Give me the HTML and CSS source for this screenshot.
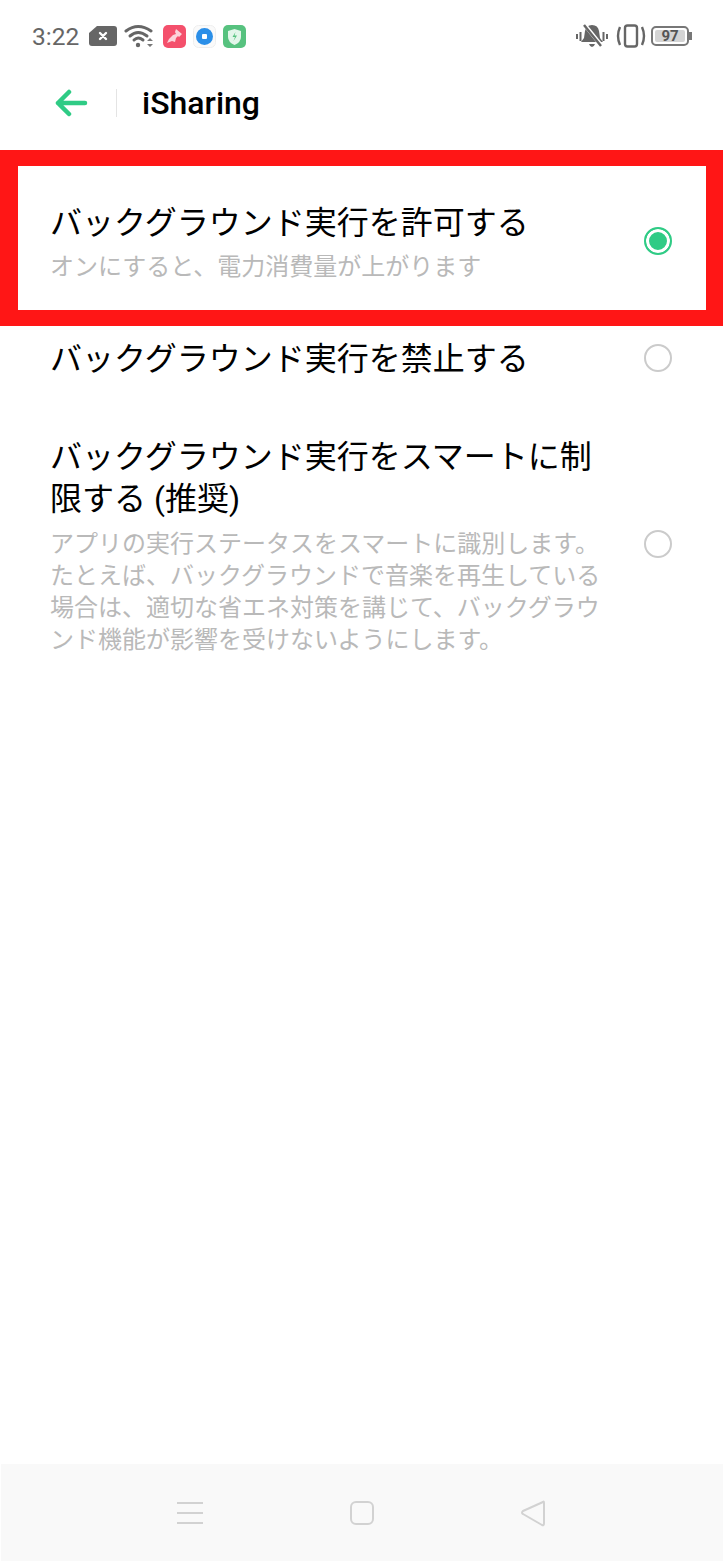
FILE: index.html
```html
<!DOCTYPE html>
<html lang="ja">

<head>
  <meta charset="UTF-8">
  <meta name="viewport" content="width=device-width, initial-scale=1.0">
  <title>iSharing</title>
  <link rel="stylesheet" href="styles.css">
</head>

<body>
  <div class="phone">
    <div class="status">
      <div class="status-left">
        <span class="time">3:22</span>
        <svg class="ic-x" width="28" height="20" viewBox="0 0 28 20">
          <path d="M8 0H25Q28 0 28 3V17Q28 20 25 20H3Q0 20 0 17V7Z" fill="#666" />
          <path d="M11 7l6 6M17 7l-6 6" stroke="#fff" stroke-width="2.4" stroke-linecap="round" />
        </svg>
        <svg class="ic-wifi" width="30" height="24" viewBox="0 0 30 24">
          <g fill="none" stroke="#666" stroke-width="3" stroke-linecap="round">
            <path d="M2 7Q14 -2 27 7" />
            <path d="M6 12Q14 5 23 12" />
            <path d="M10 16Q14 12 19 16" />
          </g>
          <circle cx="14" cy="21" r="2.2" fill="#666" />
          <path d="M23 17l3 -3 3 3zM23 20h6l-3 3z" fill="#777" />
        </svg>
        <svg class="ic-app first-app" width="23" height="23" viewBox="0 0 23 23">
          <rect width="23" height="23" rx="5" fill="#f4506c" />
          <path d="M13 4l6 5-3 3-1-1-2 2-1 4-3-1-5 2 2-4 4-4 3-1-1-2z" fill="#fcd3da" />
        </svg>
        <svg class="ic-app" width="23" height="23" viewBox="0 0 23 23">
          <rect x="0.5" y="0.5" width="22" height="22" rx="5" fill="#fafafa" stroke="#eee" />
          <circle cx="11.5" cy="11.5" r="8.500" fill="#2b8fe8" />
          <rect x="9" y="9" width="5" height="5" rx="1" fill="#fff" />
        </svg>
        <svg class="ic-app" width="23" height="23" viewBox="0 0 23 23">
          <rect width="23" height="23" rx="5" fill="#57c27f" />
          <path d="M11.5 4l6.5 2v6q0 5-6.500 8q-6.500-3-6.500-8v-6z" fill="#e3f6ea" />
          <path d="M12.500 7l-3 5h2.500l-1.500 4 3.500-5.500h-2.500z" fill="#57c27f" />
        </svg>
      </div>
      <div class="status-right">
        <svg width="32" height="28" viewBox="0 0 32 28">
          <path d="M16 3q6 0 7 6l1 7 3 4h-22l3-4 1-7q1-6 7-6zM13 22h6q-1 3-3 3t-3-3z" fill="#666" />
          <path d="M8 2l17 21" stroke="#fff" stroke-width="4" />
          <path d="M8 3l17 21" stroke="#666" stroke-width="2.4" />
          <path d="M1 12v5M4.500 10v9M27.500 10v9M31 12v5" stroke="#666" stroke-width="2" />
        </svg>
        <svg width="30" height="24" viewBox="0 0 30 24">
          <rect x="9" y="1.500" width="12" height="21" rx="2.500" fill="none" stroke="#666" stroke-width="2.400" />
          <path d="M4 3Q0 12 4 21M26 3Q30 12 26 21" fill="none" stroke="#666" stroke-width="2.400" />
        </svg>
        <div class="battery">
          <span class="battery-level">97</span>
        </div>
      </div>
    </div>

    <div class="header">
      <svg class="back" width="34" height="28" viewBox="0 0 34 28">
        <path d="M31 14H4M15 3L4 14l11 11" fill="none" stroke="#2fcb85" stroke-width="4.500" stroke-linecap="round" stroke-linejoin="round" />
      </svg>
      <span class="divider"></span>
      <span class="title">iSharing</span>
    </div>

    <ul class="options">
      <li class="option first">
        <div class="text">
          <p class="name">バックグラウンド実行を許可する</p>
          <p class="desc">オンにすると、電力消費量が上がります</p>
        </div>
        <span class="radio on"></span>
      </li>
      <li class="option second">
        <div class="text">
          <p class="name">バックグラウンド実行を禁止する</p>
        </div>
        <span class="radio"></span>
      </li>
      <li class="option third">
        <div class="text">
          <p class="name">バックグラウンド実行をスマートに制限する (推奨)</p>
          <p class="desc">アプリの実行ステータスをスマートに識別します。たとえば、バックグラウンドで音楽を再生している場合は、適切な省エネ対策を講じて、バックグラウンド機能が影響を受けないようにします。</p>
        </div>
        <span class="radio"></span>
      </li>
    </ul>

    <div class="highlight"></div>

    <div class="navbar">
      <svg width="28" height="26" viewBox="0 0 28 26">
        <path d="M1 3H27M1 13H27M1 23H27" stroke="#d2d2d2" stroke-width="2" />
      </svg>
      <svg width="26" height="26" viewBox="0 0 26 26">
        <rect x="2" y="2" width="22" height="22" rx="5" fill="none" stroke="#d2d2d2" stroke-width="2" />
      </svg>
      <svg width="28" height="28" viewBox="0 0 28 28">
        <path d="M24 3Q25 2 25 4V24Q25 27 23 26L4 15Q2 14 4 12Z" fill="none" stroke="#d2d2d2" stroke-width="2" stroke-linejoin="round" />
      </svg>
    </div>
  </div>
</body>

</html>
```

FILE: styles.css
```css
* {
  box-sizing: border-box;
}

body {
  margin: 0;
  background-color: #fff;
  font-family: Roboto, "Noto Sans CJK JP", sans-serif;
}

p {
  margin: 0;
}

.phone {
  position: relative;
  display: flex;
  flex-direction: column;
  width: 723px;
  height: 1561px;
  overflow: hidden;
}

.status {
  display: flex;
  justify-content: space-between;
  align-items: center;
  height: 72px;
  padding: 0 30px 0 32px;
}

.status-left,
.status-right {
  display: flex;
  align-items: center;
}

.time {
  font-size: 24.5px;
  color: #666;
  margin-right: 10px;
}

.ic-wifi {
  margin-left: 7px;
}

.ic-app {
  margin-left: 7px;
}

.first-app {
  margin-left: 9px;
}

.status-right {
  gap: 9px;
}

.status-right svg:first-child {
  margin-right: -1px;
}

.battery {
  position: relative;
  width: 38px;
  height: 20px;
  padding: 2px;
  border: 2px solid #777;
  border-radius: 5px;
  margin-left: -4px;
  margin-right: 4px;
}

.battery::after {
  content: "";
  position: absolute;
  right: -5px;
  top: 4px;
  width: 3px;
  height: 8px;
  background-color: #777;
}

.battery-level {
  display: block;
  height: 12px;
  line-height: 12px;
  border-radius: 2px;
  background-color: #d4d4d4;
  color: #555;
  font-size: 15px;
  font-weight: 700;
  text-align: center;
}

.header {
  display: flex;
  align-items: center;
  height: 62px;
  padding-left: 54px;
}

.divider {
  width: 1px;
  height: 28px;
  margin-left: 28px;
  background-color: #e4e4e4;
}

.title {
  margin-left: 25px;
  font-size: 32px;
  font-weight: 500;
  color: #000;
}

.options {
  list-style: none;
  margin: 0;
  padding: 0;
}

.option {
  display: flex;
  align-items: center;
  justify-content: space-between;
  padding: 0 51px 0 50px;
}

.first {
  padding-top: 68px;
}

.second {
  padding-top: 55px;
}

.third {
  padding-top: 56px;
}

.text {
  width: 552px;
}

.name {
  font-size: 32px;
  line-height: 42px;
  color: #000;
}

.desc {
  margin-top: 7px;
  font-size: 24px;
  line-height: 32px;
  color: #b9b9b9;
}

.third .desc {
  margin-top: 8px;
}

.radio {
  flex: none;
  width: 28px;
  height: 28px;
  border: 2.5px solid #cbcbcb;
  border-radius: 50%;
}

.first .radio {
  margin-top: -4px;
}

.second .radio {
  margin-top: -2px;
}

.third .radio {
  margin-top: -5px;
}

.radio.on {
  border-color: #2fcb85;
  background-color: #2fcb85;
  box-shadow: inset 0 0 0 3px #fff;
}

.highlight {
  position: absolute;
  left: 0;
  top: 150px;
  width: 723px;
  height: 176px;
  border: solid #ff1616;
  border-width: 16px 17px 16px 18px;
}

.navbar {
  display: flex;
  align-items: center;
  justify-content: space-between;
  margin: auto 0 0 1px;
  height: 97px;
  padding: 0 176px 0 175px;
  background-color: #f9f9f9;
}
```
